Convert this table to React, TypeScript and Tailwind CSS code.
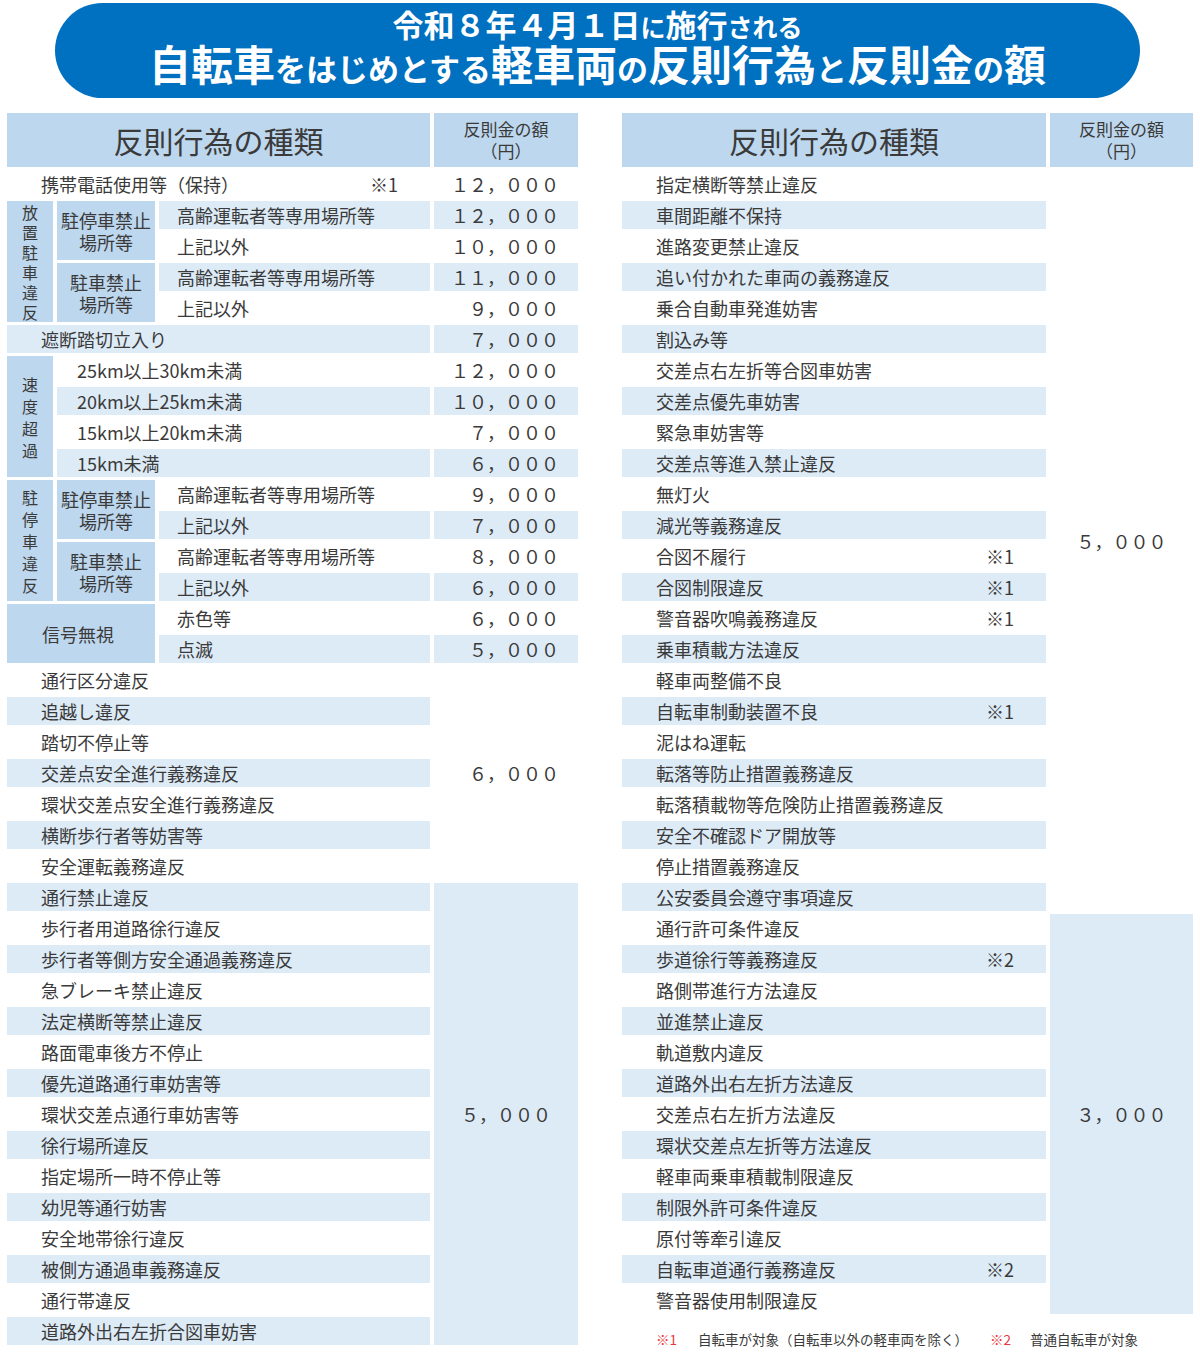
const LB = 'bg-[#bdd7ee]';
const RB = 'bg-[#ddebf7]';

function Amt({ v, blue }: { v: string; blue?: boolean }) {
  return <td className={`p-0 pr-[19px] text-right ${blue ? RB : ''}`}>{v}</td>;
}

function Vert({ text, lh }: { text: string; lh: string }) {
  return (
    <div className={`flex flex-col items-center text-[16px] ${lh}`}>
      {text.split('').map((c, i) => (
        <span key={i}>{c}</span>
      ))}
    </div>
  );
}

function Head({ span }: { span: number }) {
  return (
    <tr className="h-[54px]">
      <th colSpan={span} className={`${LB} p-0 text-[30px] font-normal leading-[40px] text-center`}>
        反則行為の種類
      </th>
      <th className={`${LB} p-0 text-[17px] font-normal leading-[22px] text-center`}>
        反則金の額
        <br />
        （円）
      </th>
    </tr>
  );
}

// small kana inside the banner title
function Kana({ t, size }: { t: string; size: string }) {
  return <span className={`inline-block leading-none ${size}`}>{t}</span>;
}

const sixGroup = [
  '通行区分違反',
  '追越し違反',
  '踏切不停止等',
  '交差点安全進行義務違反',
  '環状交差点安全進行義務違反',
  '横断歩行者等妨害等',
  '安全運転義務違反',
];

const fiveGroup = [
  '通行禁止違反',
  '歩行者用道路徐行違反',
  '歩行者等側方安全通過義務違反',
  '急ブレーキ禁止違反',
  '法定横断等禁止違反',
  '路面電車後方不停止',
  '優先道路通行車妨害等',
  '環状交差点通行車妨害等',
  '徐行場所違反',
  '指定場所一時不停止等',
  '幼児等通行妨害',
  '安全地帯徐行違反',
  '被側方通過車義務違反',
  '通行帯違反',
  '道路外出右左折合図車妨害',
];

const rightFive: [string, string?][] = [
  ['指定横断等禁止違反'],
  ['車間距離不保持'],
  ['進路変更禁止違反'],
  ['追い付かれた車両の義務違反'],
  ['乗合自動車発進妨害'],
  ['割込み等'],
  ['交差点右左折等合図車妨害'],
  ['交差点優先車妨害'],
  ['緊急車妨害等'],
  ['交差点等進入禁止違反'],
  ['無灯火'],
  ['減光等義務違反'],
  ['合図不履行', '※1'],
  ['合図制限違反', '※1'],
  ['警音器吹鳴義務違反', '※1'],
  ['乗車積載方法違反'],
  ['軽車両整備不良'],
  ['自転車制動装置不良', '※1'],
  ['泥はね運転'],
  ['転落等防止措置義務違反'],
  ['転落積載物等危険防止措置義務違反'],
  ['安全不確認ドア開放等'],
  ['停止措置義務違反'],
  ['公安委員会遵守事項違反'],
];

const rightThree: [string, string?][] = [
  ['通行許可条件違反'],
  ['歩道徐行等義務違反', '※2'],
  ['路側帯進行方法違反'],
  ['並進禁止違反'],
  ['軌道敷内違反'],
  ['道路外出右左折方法違反'],
  ['交差点右左折方法違反'],
  ['環状交差点左折等方法違反'],
  ['軽車両乗車積載制限違反'],
  ['制限外許可条件違反'],
  ['原付等牽引違反'],
  ['自転車道通行義務違反', '※2'],
  ['警音器使用制限違反'],
];

function TypeCell({ name, note, blue, span }: { name: string; note?: string; blue?: boolean; span?: number }) {
  return (
    <td colSpan={span} className={`p-0 pl-[34px] pr-[32px] ${blue ? RB : ''}`}>
      <div className="flex justify-between">
        <span>{name}</span>
        {note && <span>{note}</span>}
      </div>
    </td>
  );
}

function LeftTable() {
  return (
    <table className="table-fixed w-[579px] border-separate border-spacing-x-[4px] border-spacing-y-[3px] text-[18px] leading-[28px] whitespace-nowrap">
      <colgroup>
        <col className="w-[46px]" />
        <col className="w-[98px]" />
        <col className="w-[271px]" />
        <col className="w-[144px]" />
      </colgroup>
      <thead>
        <Head span={3} />
      </thead>
      <tbody>
        <tr className="h-[28px]">
          <TypeCell span={3} name="携帯電話使用等（保持）" note="※1" />
          <Amt v="１２，０００" />
        </tr>

        {/* 放置駐車違反 */}
        <tr className="h-[28px]">
          <td rowSpan={4} className={`${LB} p-0`}>
            <Vert text="放置駐車違反" lh="leading-[20px]" />
          </td>
          <td rowSpan={2} className={`${LB} p-0 text-center leading-[22px]`}>
            駐停車禁止
            <br />
            場所等
          </td>
          <td className={`${RB} p-0 pl-[18px]`}>高齢運転者等専用場所等</td>
          <Amt v="１２，０００" blue />
        </tr>
        <tr className="h-[28px]">
          <td className="p-0 pl-[18px]">上記以外</td>
          <Amt v="１０，０００" />
        </tr>
        <tr className="h-[28px]">
          <td rowSpan={2} className={`${LB} p-0 text-center leading-[22px]`}>
            駐車禁止
            <br />
            場所等
          </td>
          <td className={`${RB} p-0 pl-[18px]`}>高齢運転者等専用場所等</td>
          <Amt v="１１，０００" blue />
        </tr>
        <tr className="h-[28px]">
          <td className="p-0 pl-[18px]">上記以外</td>
          <Amt v="９，０００" />
        </tr>

        <tr className="h-[28px]">
          <TypeCell span={3} name="遮断踏切立入り" blue />
          <Amt v="７，０００" blue />
        </tr>

        {/* 速度超過 */}
        <tr className="h-[28px]">
          <td rowSpan={4} className={`${LB} p-0`}>
            <Vert text="速度超過" lh="leading-[22px]" />
          </td>
          <td colSpan={2} className="p-0 pl-[20px]">25km以上30km未満</td>
          <Amt v="１２，０００" />
        </tr>
        <tr className="h-[28px]">
          <td colSpan={2} className={`${RB} p-0 pl-[20px]`}>20km以上25km未満</td>
          <Amt v="１０，０００" blue />
        </tr>
        <tr className="h-[28px]">
          <td colSpan={2} className="p-0 pl-[20px]">15km以上20km未満</td>
          <Amt v="７，０００" />
        </tr>
        <tr className="h-[28px]">
          <td colSpan={2} className={`${RB} p-0 pl-[20px]`}>15km未満</td>
          <Amt v="６，０００" blue />
        </tr>

        {/* 駐停車違反 */}
        <tr className="h-[28px]">
          <td rowSpan={4} className={`${LB} p-0`}>
            <Vert text="駐停車違反" lh="leading-[22px]" />
          </td>
          <td rowSpan={2} className={`${LB} p-0 text-center leading-[22px]`}>
            駐停車禁止
            <br />
            場所等
          </td>
          <td className="p-0 pl-[18px]">高齢運転者等専用場所等</td>
          <Amt v="９，０００" />
        </tr>
        <tr className="h-[28px]">
          <td className={`${RB} p-0 pl-[18px]`}>上記以外</td>
          <Amt v="７，０００" blue />
        </tr>
        <tr className="h-[28px]">
          <td rowSpan={2} className={`${LB} p-0 text-center leading-[22px]`}>
            駐車禁止
            <br />
            場所等
          </td>
          <td className="p-0 pl-[18px]">高齢運転者等専用場所等</td>
          <Amt v="８，０００" />
        </tr>
        <tr className="h-[28px]">
          <td className={`${RB} p-0 pl-[18px]`}>上記以外</td>
          <Amt v="６，０００" blue />
        </tr>

        {/* 信号無視 */}
        <tr className="h-[28px]">
          <td rowSpan={2} colSpan={2} className={`${LB} p-0 text-center pr-[6px]`}>
            信号無視
          </td>
          <td className="p-0 pl-[18px]">赤色等</td>
          <Amt v="６，０００" />
        </tr>
        <tr className="h-[28px]">
          <td className={`${RB} p-0 pl-[18px]`}>点滅</td>
          <Amt v="５，０００" blue />
        </tr>

        {sixGroup.map((name, i) => (
          <tr key={name} className="h-[28px]">
            <TypeCell span={3} name={name} blue={i % 2 === 1} />
            {i === 0 && (
              <td rowSpan={sixGroup.length} className="p-0 pr-[19px] text-right">
                ６，０００
              </td>
            )}
          </tr>
        ))}

        {fiveGroup.map((name, i) => (
          <tr key={name} className="h-[28px]">
            <TypeCell span={3} name={name} blue={i % 2 === 0} />
            {i === 0 && (
              <td rowSpan={fiveGroup.length} className={`${RB} p-0 text-center`}>
                ５，０００
              </td>
            )}
          </tr>
        ))}
      </tbody>
    </table>
  );
}

function RightTable() {
  return (
    <table className="table-fixed w-[579px] border-separate border-spacing-x-[4px] border-spacing-y-[3px] text-[18px] leading-[28px] whitespace-nowrap">
      <colgroup>
        <col className="w-[424px]" />
        <col className="w-[143px]" />
      </colgroup>
      <thead>
        <Head span={1} />
      </thead>
      <tbody>
        {rightFive.map(([name, note], i) => (
          <tr key={name} className="h-[28px]">
            <TypeCell name={name} note={note} blue={i % 2 === 1} />
            {i === 0 && (
              <td rowSpan={rightFive.length} className="p-0 text-center">
                ５，０００
              </td>
            )}
          </tr>
        ))}
        {rightThree.map(([name, note], i) => (
          <tr key={name} className="h-[28px]">
            <TypeCell name={name} note={note} blue={i % 2 === 1} />
            {i === 0 && (
              <td rowSpan={rightThree.length} className={`${RB} p-0 text-center`}>
                ３，０００
              </td>
            )}
          </tr>
        ))}
      </tbody>
    </table>
  );
}

function Footnote() {
  return (
    <div className="mt-[12px] pl-[38px] flex items-center text-[13.5px] leading-[20px] whitespace-nowrap">
      <span className="text-[#e8383d] w-[42px]">※1</span>
      <span>自転車が対象（自転車以外の軽車両を除く）</span>
      <span className="text-[#e8383d] ml-[22px] w-[40px]">※2</span>
      <span>普通自転車が対象</span>
    </div>
  );
}

export default function App() {
  return (
    <div className="w-[1200px] h-[1356px] overflow-hidden bg-white text-[#3a3a3a] font-['Noto_Sans_CJK_JP',sans-serif]">
      {/* Banner */}
      <div className="mt-[3px] ml-[55px] w-[1085px] h-[95px] rounded-full bg-[#0070c0] text-white font-bold flex flex-col items-center pt-[4px]">
        <div className="text-[31px] leading-[33px]">
          令和８年４月１日<Kana t="に" size="text-[25px]" />施行<Kana t="される" size="text-[25px]" />
        </div>
        <div className="text-[42px] leading-[46px]">
          自転車<Kana t="をはじめとする" size="text-[31px]" />軽車両<Kana t="の" size="text-[31px]" />反則行為
          <Kana t="と" size="text-[31px]" />反則金<Kana t="の" size="text-[31px]" />額
        </div>
      </div>

      <div className="flex items-start pl-[3px] gap-[36px] mt-[12px]">
        <LeftTable />
        <div>
          <RightTable />
          <Footnote />
        </div>
      </div>
    </div>
  );
}
